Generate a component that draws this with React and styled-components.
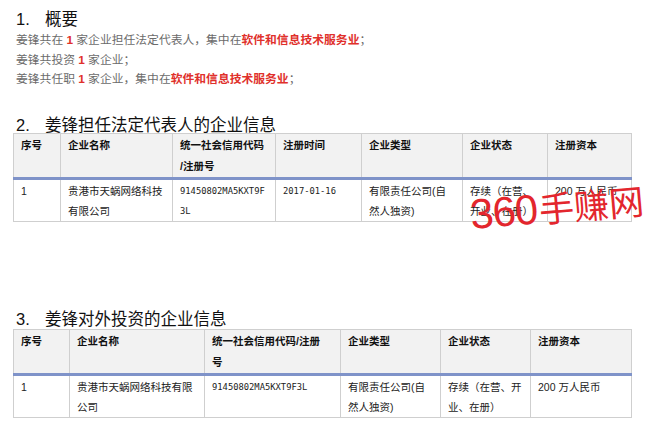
import styled, { createGlobalStyle } from 'styled-components';

const GlobalStyle = createGlobalStyle`
body {
  margin: 0;
  background: #fff;
  font-family: "Liberation Sans", "Noto Sans CJK SC", sans-serif;
}
`;

const Page = styled.div`
position: relative;
padding: 10px 19px 0 13px;
width: 650px;
height: 424px;
box-sizing: border-box;
overflow: hidden;
`;

const Heading = styled.h2`
margin: ${p => p.$top || 0}px 0 ${p => p.$bottom || 0}px 3px;
display: flex;
font-size: 16.5px;
font-weight: 400;
line-height: 18px;
color: #111;
span:first-child {
  width: 29px;
}
`;

const Line = styled.p`
margin: 0 0 0 3px;
font-size: 11.8px;
line-height: 19.5px;
color: #6b6b6b;
white-space: nowrap;
`;

const Red = styled.b`
color: #e0302b;
font-weight: 700;
`;

const Table = styled.table`
width: 618px;
border-collapse: collapse;
table-layout: fixed;
font-size: 10.5px;
`;

const Th = styled.th`
background: #f2f2f2;
border: 1px solid #cfcfcf;
border-bottom: 3px solid #7f93c9;
text-align: left;
vertical-align: top;
font-weight: 700;
color: #111;
padding: 1px 10px 0 7px;
height: 42px;
line-height: 21px;
word-break: break-all;
`;

const Td = styled.td`
border: 1px solid #cfcfcf;
vertical-align: top;
color: #222;
padding: 1px 7px 0;
height: 40px;
line-height: 20px;
font-family: ${p => (p.$mono ? '"DejaVu Sans Mono", "Liberation Mono", monospace' : 'inherit')};
font-size: ${p => (p.$mono ? '8.8px' : '10.5px')};
word-break: break-all;
`;

const Watermark = styled.div`
position: absolute;
left: 472px;
top: 194px;
font-size: 35px;
line-height: 1;
color: #e3262d;
white-space: nowrap;
transform: rotate(-5deg);
transform-origin: left bottom;
font-family: "Liberation Sans", "Noto Sans CJK SC", sans-serif;
font-weight: 400;
`;

const Digits = styled.span`
font-size: 42px;
letter-spacing: -1px;
margin-right: 2px;
`;

// \u200B lets the line break before the slash, as in the source document
const table1 = {
  widths: [47, 112, 103, 86, 101, 85, 84],
  head: ['序号', '企业名称', '统一社会信用代码\u200B/注册号', '注册时间', '企业类型', '企业状态', '注册资本'],
  row: ['1', '贵港市天蜗网络科技有限公司', '91450802MA5KXT9F3L', '2017-01-16', '有限责任公司(自然人独资)', '存续（在营、开业、在册）', '200 万人民币'],
  mono: [2, 3],
};

const table2 = {
  widths: [56, 135, 136, 100, 90, 101],
  head: ['序号', '企业名称', '统一社会信用代码/注册号', '企业类型', '企业状态', '注册资本'],
  row: ['1', '贵港市天蜗网络科技有限公司', '91450802MA5KXT9F3L', '有限责任公司(自然人独资)', '存续（在营、开业、在册）', '200 万人民币'],
  mono: [2],
};

function InfoTable({ data }) {
  return (
    <Table>
      <colgroup>
        {data.widths.map((w, i) => <col key={i} style={{ width: w }} />)}
      </colgroup>
      <thead>
        <tr>{data.head.map(h => <Th key={h}>{h}</Th>)}</tr>
      </thead>
      <tbody>
        <tr>
          {data.row.map((c, i) => <Td key={i} $mono={data.mono.includes(i)}>{c}</Td>)}
        </tr>
      </tbody>
    </Table>
  );
}

export default function App() {
  return (
    <>
      <GlobalStyle />
      <Page>
        <Heading $bottom={3}><span>1.</span><span>概要</span></Heading>
        <Line>姜锋共在 <Red>1</Red> 家企业担任法定代表人，集中在<Red>软件和信息技术服务业</Red>；</Line>
        <Line>姜锋共投资 <Red>1</Red> 家企业；</Line>
        <Line>姜锋共任职 <Red>1</Red> 家企业，集中在<Red>软件和信息技术服务业</Red>；</Line>
        <Heading $top={26} $bottom={-1}><span>2.</span><span>姜锋担任法定代表人的企业信息</span></Heading>
        <InfoTable data={table1} />
        <Heading $top={88} $bottom={1}><span>3.</span><span>姜锋对外投资的企业信息</span></Heading>
        <InfoTable data={table2} />
        <Watermark><Digits>360</Digits>手赚网</Watermark>
      </Page>
    </>
  );
}
